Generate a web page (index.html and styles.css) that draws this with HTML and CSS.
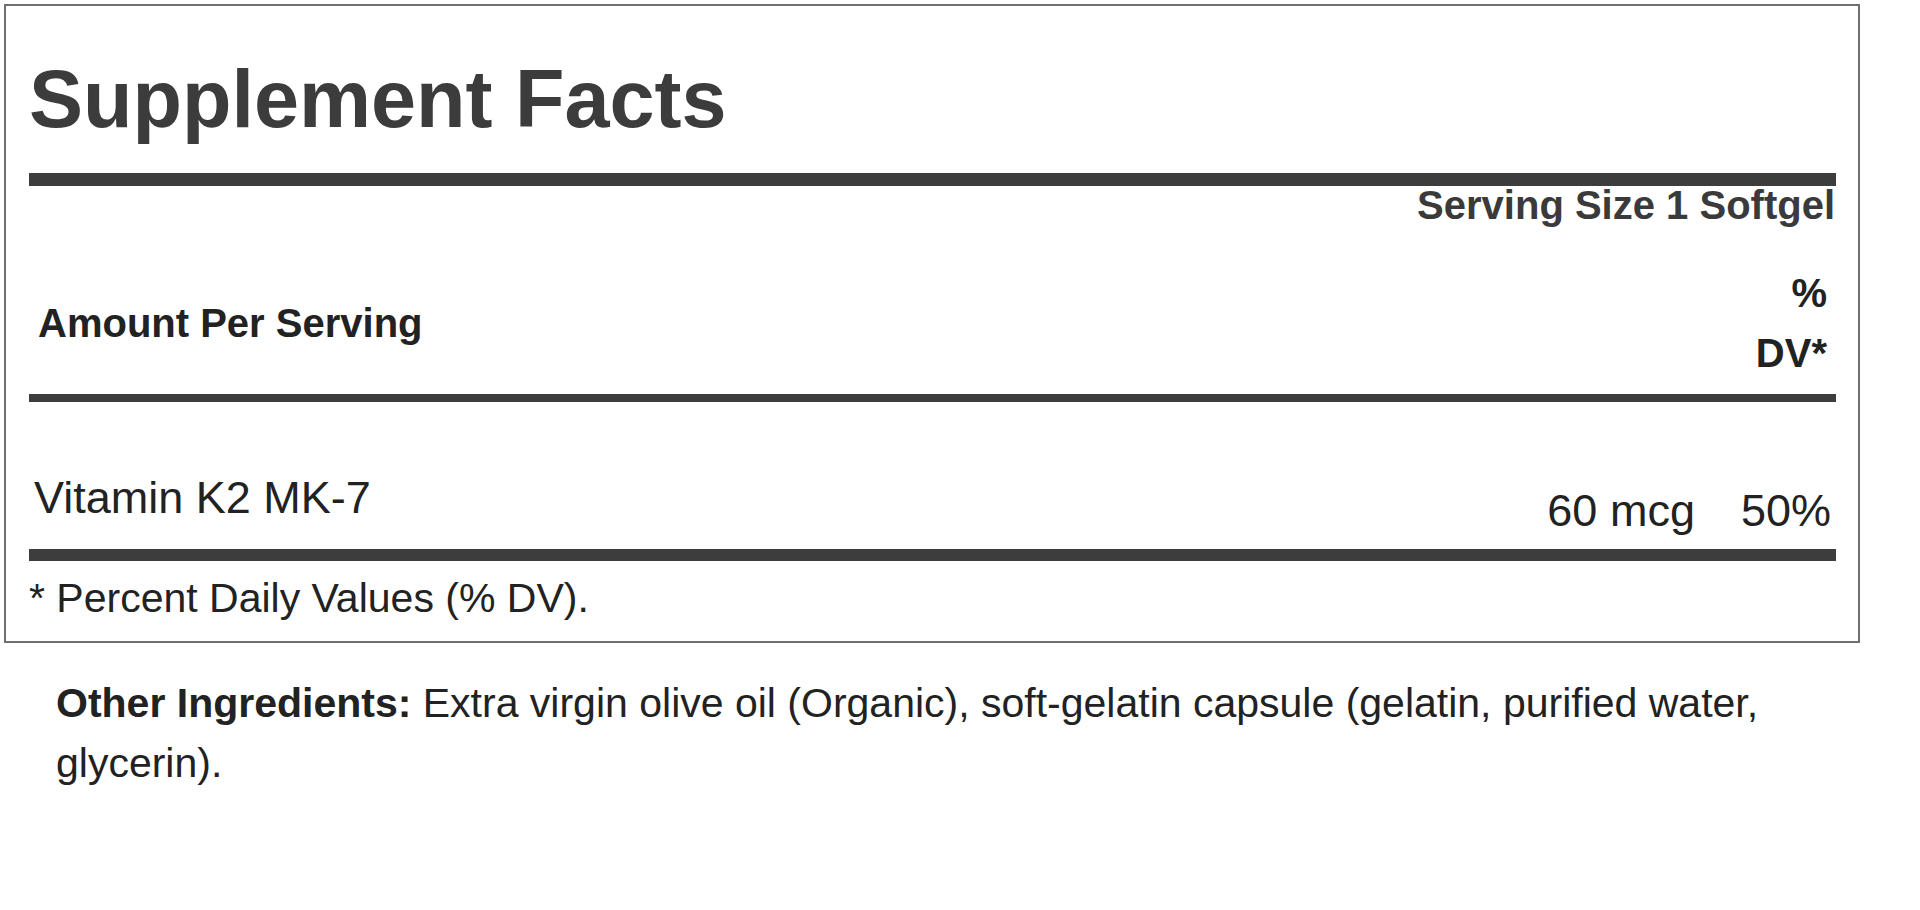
FILE: index.html
```html
<!DOCTYPE html>
<html lang="en">
<head>
<meta charset="utf-8">
<title>Supplement Facts</title>
<link rel="stylesheet" href="styles.css">
</head>
<body>
<section class="label">
  <h1 class="title">Supplement Facts</h1>
  <div class="bar bar-thick"></div>
  <div class="serving">Serving Size 1 Softgel</div>
  <div class="head-row">
    <div class="head-amount">Amount Per Serving</div>
    <div class="head-dv">% DV*</div>
  </div>
  <div class="bar bar-mid"></div>
  <div class="nutrient-row">
    <div class="nutrient-name">Vitamin K2 MK-7</div>
    <div class="nutrient-values">
      <span class="nutrient-amount">60 mcg</span>
      <span class="nutrient-dv">50%</span>
    </div>
  </div>
  <div class="bar bar-bottom"></div>
  <p class="footnote">* Percent Daily Values (% DV).</p>
</section>
<p class="ingredients"><strong>Other Ingredients:</strong> Extra virgin olive oil (Organic), soft-gelatin capsule (gelatin, purified water, glycerin).</p>
</body>
</html>
```

FILE: styles.css
```css
html, body {
  margin: 0;
  padding: 0;
  background: #ffffff;
}

body {
  font-family: "Liberation Sans", Arial, sans-serif;
  color: #222222;
}

.label {
  margin: 4px 60px 0 4px;
  border: 2px solid #707070;
  padding: 46px 22px 19px 23px;
}

.title {
  margin: 0 0 27px 0;
  font-size: 81px;
  line-height: 94px;
  font-weight: 700;
  color: #3c3c3c;
}

.bar {
  background: #3d3d3d;
}

.bar-thick {
  height: 13px;
}

.bar-mid {
  height: 8px;
}

.bar-bottom {
  height: 12px;
}

.serving {
  padding: 1px 1px 0 0;
  font-size: 40px;
  line-height: 36px;
  font-weight: 700;
  text-align: right;
  color: #3a3a3a;
}

.head-row {
  display: flex;
  justify-content: space-between;
  align-items: center;
  padding: 40px 9px 11px 9px;
  font-size: 40px;
  line-height: 60px;
  font-weight: 700;
  color: #222222;
}

.head-dv {
  width: 76px;
  text-align: right;
}

.nutrient-row {
  display: flex;
  justify-content: space-between;
  align-items: flex-start;
  padding: 66px 5px 8px 5px;
  font-size: 45px;
  line-height: 60px;
}

.nutrient-values {
  display: flex;
  gap: 46px;
  margin-top: 13px;
}

.footnote {
  margin: 13px 0 0 0;
  font-size: 41px;
  line-height: 48px;
}

.ingredients {
  margin: 30px 60px 0 56px;
  font-size: 41px;
  line-height: 60px;
  color: #222222;
}

.ingredients strong {
  font-weight: 700;
}
```
